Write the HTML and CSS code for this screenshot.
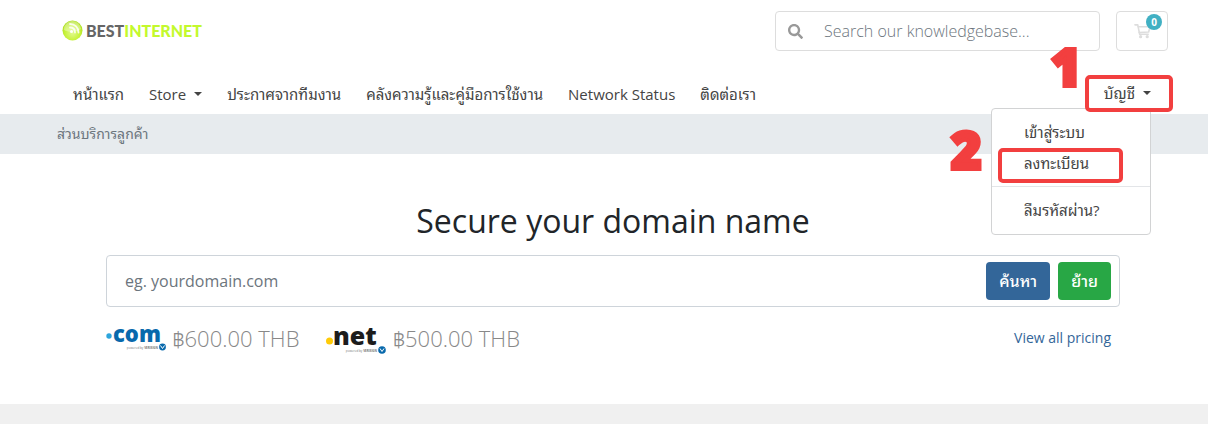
FILE: index.html
```html
<!DOCTYPE html>
<html lang="th">
<head>
<meta charset="utf-8">
<meta name="viewport" content="width=device-width, initial-scale=1">
<title>Best Internet</title>
<link rel="stylesheet" href="styles.css">
</head>
<body>
<header class="header">
  <div class="topbar">
    <a class="logo" href="#" aria-label="Best Internet">
      <svg class="logo-mark" viewBox="0 0 21 21" aria-hidden="true">
        <defs><radialGradient id="orb" cx="50%" cy="62%" r="55%"><stop offset="0" stop-color="#e2fa90"/><stop offset=".7" stop-color="#c6f238"/><stop offset="1" stop-color="#aee022"/></radialGradient></defs>
        <circle cx="10.500" cy="10.500" r="10" fill="url(#orb)"/>
        <path d="M2 10a8.500 8.500 0 0 1 17-1c-4 3-12 4-17 1z" fill="#fff" opacity=".35"/>
        <g fill="none" stroke="#fff" stroke-width="1.800" stroke-linecap="round" opacity=".85"><path d="M8 7.500c3 0 5 2 5 5"/><path d="M8 4c5 0 8.500 3.500 8.500 8.500"/></g>
        <circle cx="9.500" cy="11.500" r="1.500" fill="#fff"/>
      </svg>
      <span class="logo-text">BEST<span class="logo-accent">INTERNET</span></span>
    </a>
    <form class="kb-search">
      <button class="kb-button" type="button" aria-label="Search">
        <svg class="kb-icon" viewBox="0 0 512 512" aria-hidden="true"><path fill="currentColor" d="M505 442.700 405.300 343c-4.500-4.500-10.600-7-17-7H372c27.600-35.300 44-79.700 44-128C416 93.100 322.900 0 208 0S0 93.100 0 208s93.100 208 208 208c48.300 0 92.700-16.400 128-44v16.300c0 6.400 2.500 12.500 7 17l99.700 99.700c9.400 9.400 24.600 9.400 33.900 0l28.300-28.300c9.400-9.400 9.400-24.600.1-34zM208 336c-70.700 0-128-57.200-128-128 0-70.700 57.200-128 128-128 70.700 0 128 57.200 128 128 0 70.700-57.200 128-128 128z"/></svg>
      </button>
      <input class="kb-input" type="text" aria-label="Search our knowledgebase" placeholder="Search our knowledgebase...">
    </form>
    <a class="cart" href="#" aria-label="Shopping cart">
      <svg class="cart-icon" viewBox="0 0 18 16" aria-hidden="true"><g fill="none" stroke="currentColor" stroke-width="1.700" stroke-linejoin="round" stroke-linecap="round"><path d="M1 1.500h3l2 10h9"/><path d="M4.500 3.500H17l-1.500 5.500-10 .6"/></g><circle cx="7" cy="14" r="1.700" fill="currentColor"/><circle cx="14" cy="14" r="1.700" fill="currentColor"/></svg>
      <span class="badge">0</span>
    </a>
  </div>
  <nav class="nav">
    <a class="nav-link" href="#">หน้าแรก</a>
    <button class="nav-link caret" type="button">Store</button>
    <a class="nav-link" href="#">ประกาศจากทีมงาน</a>
    <a class="nav-link" href="#">คลังความรู้และคู่มือการใช้งาน</a>
    <a class="nav-link" href="#">Network Status</a>
    <a class="nav-link" href="#">ติดต่อเรา</a>
    <div class="account">
      <button class="nav-link caret account-toggle" type="button">บัญชี</button>
      <span class="step step-one">1</span>
      <div class="menu">
        <a class="menu-item" href="#">เข้าสู่ระบบ</a>
        <a class="menu-item marked" href="#">ลงทะเบียน</a>
        <hr class="menu-rule">
        <a class="menu-item" href="#">ลืมรหัสผ่าน?</a>
        <span class="step step-two">2</span>
      </div>
    </div>
  </nav>
</header>
<div class="breadcrumb">ส่วนบริการลูกค้า</div>
<main class="domain">
  <h1 class="title">Secure your domain name</h1>
  <form class="domain-search">
    <input class="domain-input" type="text" aria-label="Domain name" placeholder="eg. yourdomain.com">
    <button class="btn btn-primary" type="button">ค้นหา</button>
    <button class="btn btn-success" type="button">ย้าย</button>
  </form>
  <div class="pricing">
    <div class="tld">
      <svg class="tld-logo" viewBox="0 0 60 32" role="img" aria-label=".com">
        <circle cx="3" cy="14" r="2.700" fill="#2da5dc"/>
        <text class="tld-name com" x="7" y="20">com</text>
        <text class="tld-note" x="52" y="27">powered by <tspan class="tld-brand">VERISIGN</tspan></text>
        <circle cx="56.500" cy="25" r="3.400" fill="#0869ac"/><path d="M54.500 23.500l2 3 2-3" fill="none" stroke="#fff"/>
      </svg>
      <span class="price">฿600.00 THB</span>
    </div>
    <div class="tld">
      <svg class="tld-logo" viewBox="0 0 60 32" role="img" aria-label=".net">
        <circle cx="3.500" cy="19" r="3.500" fill="#ffcb08"/>
        <text class="tld-name net" x="7" y="23">net</text>
        <text class="tld-note" x="51" y="30">powered by <tspan class="tld-brand">VERISIGN</tspan></text>
        <circle cx="56" cy="28" r="3.800" fill="#0869ac"/><path d="M54 26.500l2 3 2-3" fill="none" stroke="#fff"/>
      </svg>
      <span class="price">฿500.00 THB</span>
    </div>
    <a class="all-pricing" href="#">View all pricing</a>
  </div>
</main>
</body>
</html>
```
FILE: styles.css
```css
*, *::before { box-sizing: border-box; }
body {
  margin: 0;
  background: #f0f0f0;
  color: #212529;
  font: 16px/24px "Open Sans", "Noto Sans Thai Looped", "Noto Looped Thai", Loma, Waree, "Noto Sans", sans-serif;
}
a { text-decoration: none; color: inherit; }
button, input { font: inherit; color: inherit; margin: 0; }
button { border: 0; background: none; padding: 0; cursor: pointer; }

.header { background: #fff; padding: 11px 40px 0 62px; }
.topbar { display: flex; gap: 16px; height: 64px; align-items: flex-start; }
.logo { display: flex; align-items: center; gap: 3px; height: 39px; margin-right: auto; }
.logo-mark { width: 21px; height: 21px; }
.logo-text { font: 900 16px/20px Lato, sans-serif; color: #666; }
.logo-accent { color: #c3f92d; }
.kb-search { display: flex; width: 325px; height: 40px; border: 1px solid #ddd; border-radius: 4px; }
.kb-button { width: 38px; display: grid; place-items: center; color: #999; }
.kb-icon { width: 15px; height: 15px; }
.kb-input { flex: 1; min-width: 0; border: 0; outline: 0; background: none; padding: 0 10px; font-weight: 300; }
.kb-input::placeholder, .domain-input::placeholder { color: #6c757d; opacity: 1; }
.cart { position: relative; width: 52px; height: 40px; border: 1px solid #ddd; border-radius: 4px; display: grid; place-items: center; color: #ddd; }
.cart-icon { width: 17px; height: 16px; }
.badge {
  position: absolute; top: 2px; right: 5px; width: 16px; height: 16px;
  border-radius: 50%; background: #41b0c3; color: #fff;
  font-size: 10px; font-weight: 700; line-height: 16px; text-align: center;
}

.nav { display: flex; gap: 25px; padding-left: 11px; height: 39px; align-items: center; color: #444; font-size: 15px; }
.nav-link { white-space: nowrap; line-height: 39px; }
.caret::after { content: ""; display: inline-block; margin-left: 8px; vertical-align: 4px; border: 4px solid transparent; border-top-color: currentColor; border-bottom: 0; }
.account { position: relative; margin: 0 -5px 3px auto; }
.account-toggle { display: block; position: relative; z-index: 2; height: 37px; padding: 0 18px 0 15px; border: 4px solid #f23f3f; border-radius: 5px; line-height: 29px; }
.menu {
  position: absolute; z-index: 1; top: 33px; right: 22px; width: 160px; height: 127px;
  padding: 8px 0; background: #fff; border: 1px solid #d2d3d4; border-radius: 4px;
}
.menu-item { display: block; height: 31px; line-height: 31px; padding-left: 32px; font-size: 15px; }
.marked { position: relative; }
.marked::before { content: ""; position: absolute; left: 6px; right: 27px; top: 0; height: 35px; border: 4px solid #f23f3f; border-radius: 5px; }
.menu-rule { margin: 7px 0 8px; border: 0; border-top: 1px solid #e3e5e8; }
.step { position: absolute; color: #f23f3f; font: 800 52px/52px "Open Sans", sans-serif; -webkit-text-stroke: 4px #f23f3f; }
.step-one { left: -34px; top: -35px; }
.step-two { left: -41px; top: 14px; }

.breadcrumb { background: #e7ebee; color: #6c757d; height: 40px; padding-left: 57px; font-size: 14px; line-height: 40px; }

.domain { background: #fff; padding: 48px 88px 50px 106px; }
.title { margin: 0 0 15px; font-size: 32px; line-height: 38px; font-weight: 400; text-align: center; }
.domain-search { display: flex; align-items: center; gap: 8px; height: 52px; padding: 0 8px 0 0; border: 1px solid #ced4da; border-radius: 4px; }
.domain-input { flex: 1; min-width: 0; border: 0; outline: 0; background: none; padding: 0 18px; }
.btn { height: 38px; padding: 0 13px; border-radius: 4px; color: #fff; font-size: 16px; font-weight: 500; }
.btn-primary { background: #336699; }
.btn-success { background: #28a745; }
.pricing { display: flex; align-items: center; gap: 27px; height: 33px; margin-top: 14px; }
.tld { display: flex; align-items: center; gap: 6px; }
.tld-logo { width: 60px; height: 32px; overflow: visible; }
.tld-name { font-family: "Open Sans", sans-serif; font-weight: 800; }
.com { font-size: 22px; fill: #0869ac; }
.net { font-size: 25px; fill: #1c1c1c; }
.tld-note { font: 3px "Open Sans", sans-serif; fill: #777; text-anchor: end; }
.tld-brand { font-weight: 700; }
.price { font-size: 22px; font-weight: 300; color: #888; white-space: nowrap; }
.all-pricing { margin: 0 9px 0 auto; color: #336699; font-size: 14px; }
```
